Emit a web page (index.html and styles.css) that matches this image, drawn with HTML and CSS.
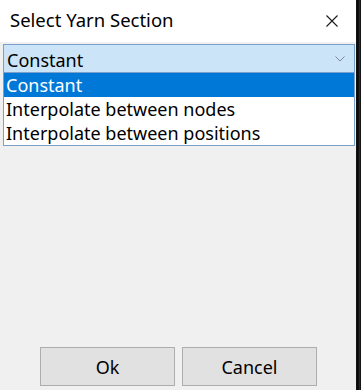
FILE: index.html
```html
<!DOCTYPE html>
<html>
<head>
<meta charset="utf-8">
<link rel="stylesheet" href="styles.css">
</head>
<body>
<div class="screen">
  <div class="dialog">
    <div class="titlebar">
      <span class="title">Select Yarn Section</span>
      <span class="close">
        <svg width="12" height="12" viewBox="0 0 12 12"><path d="M0.5 0.5 L11.5 11.5 M11.5 0.5 L0.5 11.5" stroke="#1a1a1a" stroke-width="1.1" fill="none"/></svg>
      </span>
    </div>
    <div class="content">
      <div class="combo">
        <div class="combo-head">
          <span class="combo-value">Constant</span>
          <svg class="chev" width="10" height="6" viewBox="0 0 10 6"><path d="M0.5 0.5 L5 5 L9.5 0.5" stroke="#7d8a96" stroke-width="1" fill="none"/></svg>
        </div>
        <ul class="combo-list">
          <li class="opt selected">Constant</li>
          <li class="opt">Interpolate between nodes</li>
          <li class="opt">Interpolate between positions</li>
        </ul>
      </div>
      <div class="buttons">
        <button class="btn">Ok</button>
        <button class="btn">Cancel</button>
      </div>
    </div>
  </div>
  <div class="edge"></div>
</div>
</body>
</html>
```
FILE: styles.css
```css
*, *::before, *::after {
  box-sizing: border-box;
}
html, body {
  margin: 0;
  padding: 0;
}
body {
  width: 361px;
  height: 390px;
  overflow: hidden;
  font-family: "Noto Sans", "Open Sans", sans-serif;
  color: #000;
}
.screen {
  display: flex;
  height: 390px;
}
.dialog {
  width: 356px;
  height: 390px;
  display: flex;
  flex-direction: column;
  background: #f0f0f0;
}
.edge {
  flex: 1;
  background: linear-gradient(90deg, #1a1a1a 0, #050505 40%, #2a2a2a 70%, #0a0a0a 100%);
}
.titlebar {
  height: 42px;
  background: #fff;
  display: flex;
  align-items: center;
  justify-content: space-between;
  padding: 0 18px 0 10px;
}
.title {
  font-size: 18.5px;
  line-height: 22px;
  margin-bottom: 3px;
}
.close {
  display: flex;
  width: 12px;
  height: 12px;
}
.content {
  flex: 1;
  display: flex;
  flex-direction: column;
  justify-content: space-between;
  padding: 2px 1px 4px 3px;
}
.combo {
  width: 352px;
}
.combo-head {
  height: 29px;
  background: #cce4f7;
  border: 1px solid #7a9fc8;
  display: flex;
  align-items: center;
  justify-content: space-between;
  padding: 0 9px 0 3px;
}
.combo-value {
  font-size: 18px;
  line-height: 24px;
  margin-top: 3px;
}
.combo-list {
  list-style: none;
  margin: 0;
  padding: 0;
  background: #fff;
  border: 1px solid #7a9fc8;
  border-top: none;
}
.opt {
  height: 24px;
  line-height: 24px;
  font-size: 18px;
  padding-left: 2px;
  white-space: nowrap;
}
.opt.selected {
  background: #0078d7;
  color: #fff;
}
.buttons {
  display: flex;
  gap: 7px;
  padding-left: 37px;
}
.btn {
  width: 135px;
  height: 39px;
  background: #e1e1e1;
  border: 1px solid #adadad;
  font-family: "Noto Sans", "Open Sans", sans-serif;
  font-size: 18px;
  color: #000;
  padding: 0;
}
```
